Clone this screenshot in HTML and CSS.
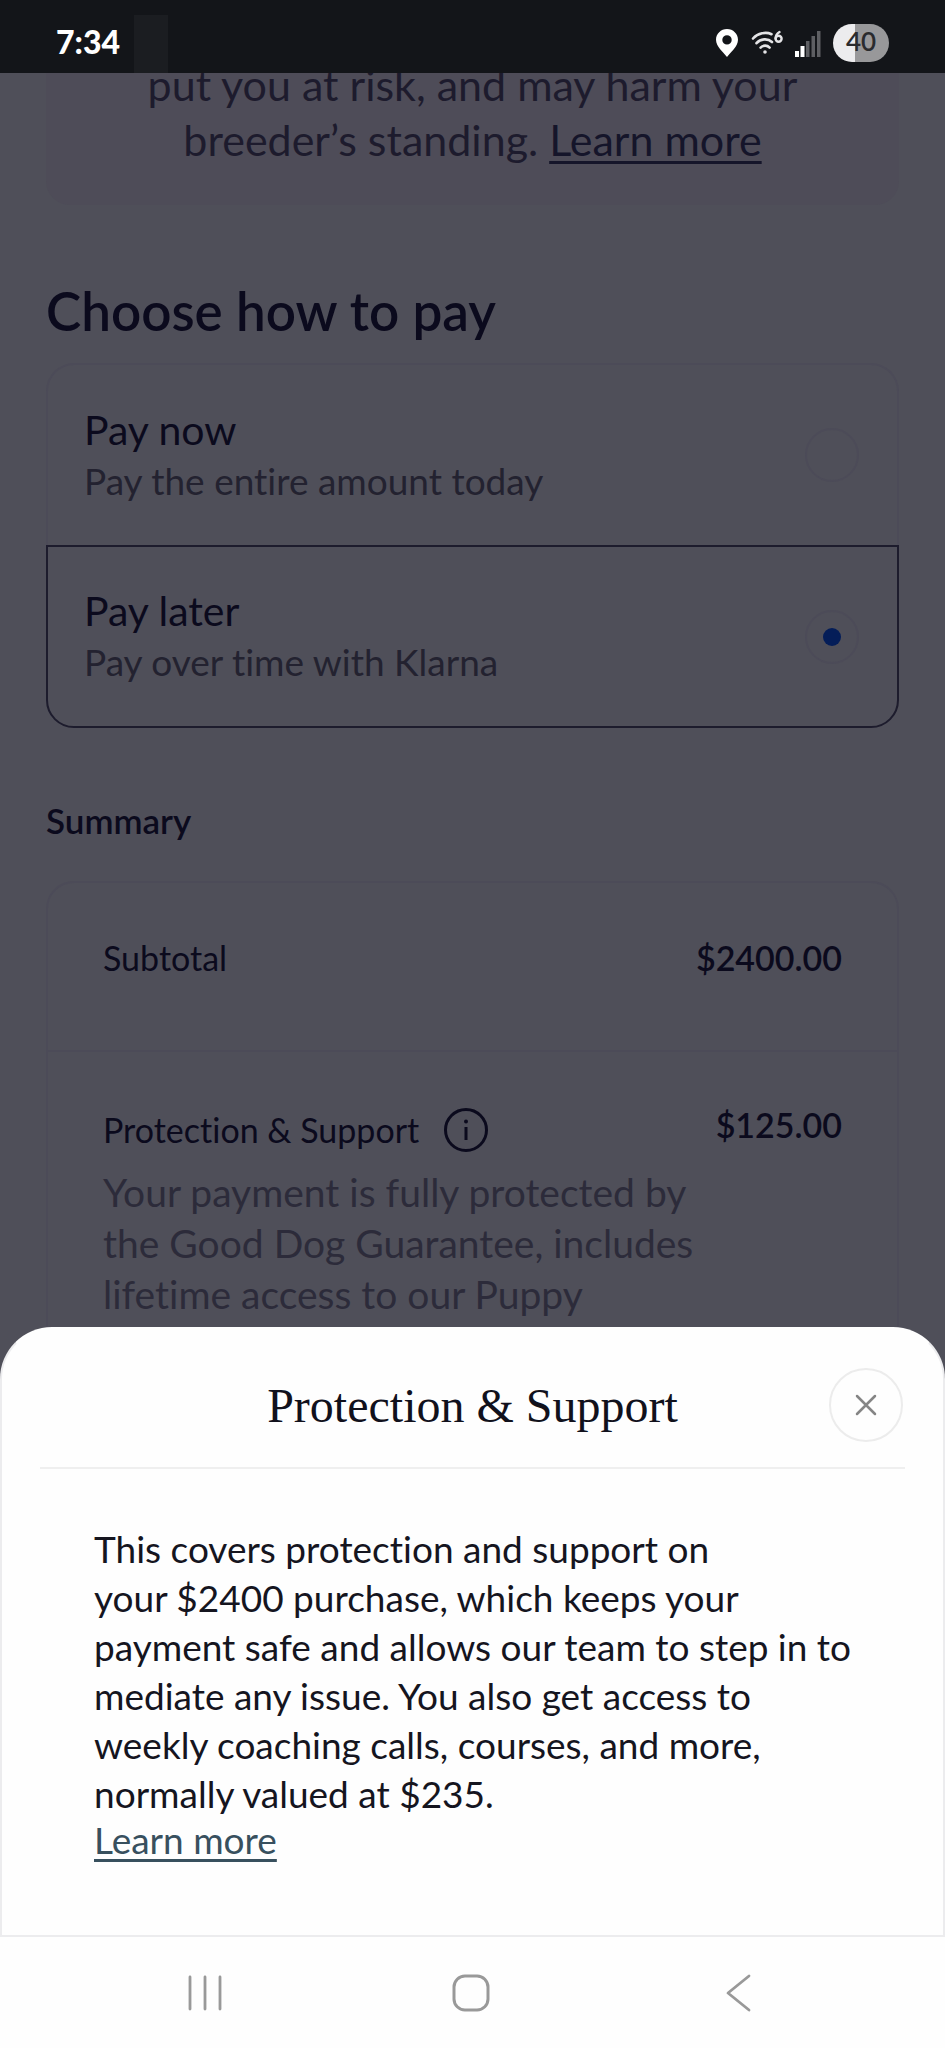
FILE: index.html
```
<!DOCTYPE html>
<html lang="en">
<head>
<meta charset="utf-8">
<meta name="viewport" content="width=device-width, initial-scale=1">
<title>Protection &amp; Support</title>
<link rel="stylesheet" href="styles.css">
</head>
<body>
<header class="status">
  <time class="status-time">7:34</time>
  <span class="status-block"></span>
  <div class="status-icons">
    <svg width="24" height="30" viewBox="0 0 24 30" aria-hidden="true"><path fill="#fff" fill-rule="evenodd" d="M12 1C5.900 1 1 5.800 1 11.800c0 7 7.500 12.500 11 17.200 3.500-4.700 11-10.200 11-17.200C23 5.800 18.100 1 12 1zm0 6.200a4.700 4.700 0 1 1 0 9.400 4.700 4.700 0 0 1 0-9.400z"/></svg>
    <svg width="32" height="26" viewBox="0 0 32 26" fill="none" stroke="#e4e4e6" stroke-width="2.600" stroke-linecap="round" aria-hidden="true"><path d="M2 8.500C7 3 15 1.600 20.500 4.200M5.500 13.200c4-4.500 11-5.200 15.500-1.200M9.600 17.600c2.600-2.600 6.600-2.600 9 0"/><circle cx="14" cy="22" r="1.800" fill="#e4e4e6" stroke="none"/><path stroke-width="2.400" d="M28.500 2c-2.500 1.500-3.900 4-3.900 6.500"/><circle cx="27.600" cy="8.800" r="3" stroke-width="2.400"/></svg>
    <svg width="26" height="27" viewBox="0 0 26 27" aria-hidden="true"><path fill="#fff" d="M0 21h4v6H0zM5.500 16h4v11h-4z"/><path fill="#5e5f63" d="M11 11h3.500v16H11zM16.500 6H20v21h-3.500zM22 1h3.500v26H22z"/></svg>
    <span class="battery">40</span>
  </div>
</header>

<div class="stage">
  <main class="page">
    <section class="notice">
      <p>put you at risk, and may harm your<br>breeder’s standing. <a href="#">Learn more</a></p>
    </section>

    <h1 class="heading">Choose how to pay</h1>
    <div class="options">
      <label class="option">
        <span class="option-text"><span class="option-title">Pay now</span><span class="option-sub">Pay the entire amount today</span></span>
        <input class="radio" type="radio" name="pay">
      </label>
      <label class="option option-on">
        <span class="option-text"><span class="option-title">Pay later</span><span class="option-sub">Pay over time with Klarna</span></span>
        <input class="radio" type="radio" name="pay" checked>
      </label>
    </div>

    <h2 class="summary-title">Summary</h2>
    <div class="summary">
      <div class="row row-subtotal">
        <span>Subtotal</span>
        <strong class="amount">$2400.00</strong>
      </div>
      <div class="row row-support">
        <div>
          <div class="support-name">
            <span>Protection &amp; Support</span>
            <button class="info" type="button" aria-label="About Protection &amp; Support">
              <svg width="46" height="46" viewBox="0 0 46 46" fill="none" stroke="currentColor" stroke-width="3" aria-hidden="true"><circle cx="23" cy="23" r="20.500"/><path d="M23 20v13"/><circle cx="23" cy="14.500" r="2" fill="currentColor" stroke="none"/></svg>
            </button>
          </div>
          <p class="support-desc">Your payment is fully protected by<br>the Good Dog Guarantee, includes<br>lifetime access to our Puppy</p>
        </div>
        <strong class="amount">$125.00</strong>
      </div>
    </div>
  </main>

  <section class="sheet" role="dialog" aria-labelledby="sheet-title">
    <div class="sheet-head">
      <h2 class="sheet-title" id="sheet-title">Protection &amp; Support</h2>
      <button class="close" type="button" aria-label="Close">
        <svg width="22" height="22" viewBox="0 0 22 22" fill="none" stroke="#858585" stroke-width="2.500" stroke-linecap="round" aria-hidden="true"><path d="M2 2l18 18M20 2L2 20"/></svg>
      </button>
    </div>
    <div class="sheet-body">
      <p>This covers protection and support on<br>your $2400 purchase, which keeps your<br>payment safe and allows our team to step in to<br>mediate any issue. You also get access to<br>weekly coaching calls, courses, and more,<br>normally valued at $235.</p>
      <a class="sheet-link" href="#">Learn more</a>
    </div>
  </section>
</div>

<nav class="nav" aria-label="System">
  <button type="button" aria-label="Recent apps"><svg width="36" height="38" viewBox="0 0 36 38" stroke="#999" stroke-width="2.800" stroke-linecap="round" aria-hidden="true"><path d="M3 3v32M18 3v32M33 3v32"/></svg></button>
  <button type="button" aria-label="Home"><svg width="40" height="40" viewBox="0 0 40 40" fill="none" stroke="#999" stroke-width="3" aria-hidden="true"><rect x="3" y="3" width="34" height="34" rx="11"/></svg></button>
  <button type="button" aria-label="Back"><svg width="26" height="38" viewBox="0 0 26 38" fill="none" stroke="#999" stroke-width="2.800" stroke-linecap="round" stroke-linejoin="round" aria-hidden="true"><path d="M24 2L3 19l21 17"/></svg></button>
</nav>
</body>
</html>
```
FILE: styles.css
```
* { box-sizing: border-box; }

body {
  margin: 0;
  min-height: 100vh;
  display: flex;
  flex-direction: column;
  background: #fefefe;
  color: #0b0a1d;
  font-family: Lato, "Noto Sans", sans-serif;
  font-variant-ligatures: none;
}

h1, h2, p { margin: 0; }
button { padding: 0; border: 0; background: none; color: inherit; font: inherit; }

.status {
  display: flex;
  align-items: stretch;
  height: 73px;
  padding: 0 56px;
  background: #131519;
  color: #fff;
}
.status-time { width: 78px; padding-top: 22px; font-size: 32px; line-height: 40px; font-weight: 900; }
.status-block { width: 34px; margin-top: 15px; background: #1b1d21; }
.status-icons { display: flex; align-items: center; gap: 12px; margin-left: auto; padding-top: 13px; }
.battery {
  width: 56px;
  height: 38px;
  border-radius: 19px;
  background: linear-gradient(90deg, #ececee 40%, #98989a 40%);
  color: #2a2b2e;
  font-size: 26px;
  font-weight: 600;
  line-height: 34px;
  text-align: center;
}

.stage { flex: 1; display: grid; grid-template: minmax(0, 1fr) / minmax(0, 1fr); }
.page, .sheet { grid-area: 1 / 1; }

.page { display: flex; flex-direction: column; padding: 0 46px; background: #4f4f59; overflow: hidden; }
.notice {
  height: 132px;
  border-radius: 0 0 24px 24px;
  background: #4e4c58;
  color: #1d1b2d;
  font-size: 43px;
  line-height: 55px;
  text-align: center;
}
.notice p { margin-top: -16px; }
.notice a { color: #15152a; text-underline-offset: 5px; text-decoration-thickness: 3px; }

.heading { margin-top: 72px; font-size: 53px; line-height: 68px; font-weight: 600; }
.options { margin-top: 18px; }
.option {
  display: flex;
  align-items: center;
  justify-content: space-between;
  height: 182px;
  padding: 0 38px 0 36px;
  border: 2px solid #4c4b58;
  border-bottom: 0;
  border-radius: 28px 28px 0 0;
}
.option-on { height: 183px; border: 2px solid #1d1c2d; border-radius: 0 0 28px 28px; }
.option-text { display: flex; flex-direction: column; padding-bottom: 3px; }
.option-title { font-size: 41px; line-height: 54px; }
.option-sub { color: #232230; font-size: 37px; line-height: 48px; }
.radio {
  appearance: none;
  display: grid;
  place-items: center;
  width: 54px;
  height: 54px;
  margin: 0;
  border: 2px solid #4c4b58;
  border-radius: 50%;
}
.radio:checked::before { content: ""; width: 18px; height: 18px; border-radius: 50%; background: #041d58; }

.summary-title { margin-top: 68px; font-size: 35px; line-height: 48px; font-weight: 600; }
.summary { flex: 1; margin-top: 37px; border: 2px solid #4c4b58; border-radius: 28px 28px 0 0; font-size: 34px; line-height: 48px; }
.row { display: flex; justify-content: space-between; padding: 0 55px; }
.row-subtotal { padding-top: 51px; padding-bottom: 68px; border-bottom: 2px solid #4c4b58; }
.row-support { padding-top: 49px; }
.amount { font-weight: 600; }
.support-name { display: flex; align-items: center; gap: 24px; padding-top: 5px; }
.info { display: flex; }
.support-desc { margin-top: 13px; color: #2c2b3a; font-size: 39px; line-height: 51px; }

.sheet {
  align-self: end;
  z-index: 1;
  min-height: 610px;
  padding: 0 38px 60px;
  border: 2px solid #ececee;
  border-top-color: #fefefe;
  border-radius: 52px 52px 0 0;
  background: #fefefe;
  color: #15151f;
}
.sheet-head {
  display: grid;
  grid-template-columns: 76px 1fr 76px;
  align-items: center;
  height: 140px;
  padding-top: 14px;
  border-bottom: 2px solid #efefef;
}
.sheet-title { grid-column: 2; color: #11111c; font-family: "Liberation Serif", serif; font-size: 48px; font-weight: 400; text-align: center; }
.close { display: grid; place-items: center; width: 74px; height: 74px; border: 2px solid #ececec; border-radius: 50%; }
.sheet-body { display: flex; flex-direction: column; align-items: flex-start; padding: 55px 0 0 54px; font-size: 37px; line-height: 49px; }
.sheet-link { color: #38505e; line-height: 44px; text-underline-offset: 5px; text-decoration-thickness: 3px; }

.nav { display: grid; grid-template-columns: 1fr 1fr 1fr; height: 111px; padding: 0 74px 0 72px; background: #fefefe; }
.nav button { display: grid; place-items: center; }
```
